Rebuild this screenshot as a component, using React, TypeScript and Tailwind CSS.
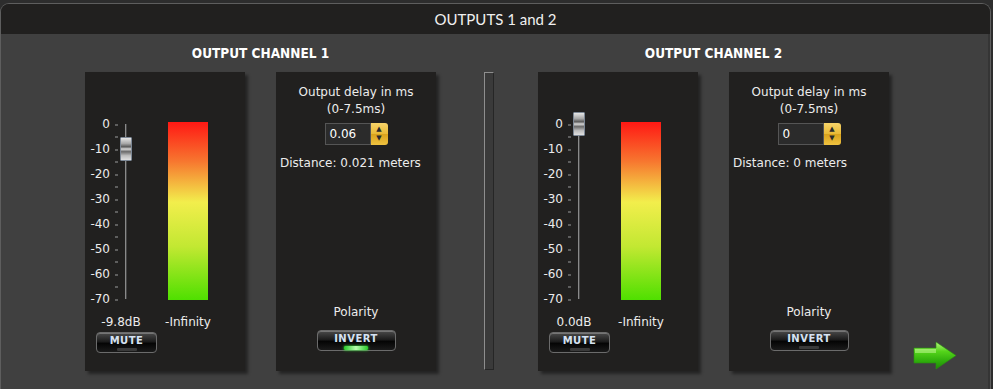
import React from "react";

const scaleMarks = [0, -10, -20, -30, -40, -50, -60, -70];

const panelFont = { fontFamily: '"DejaVu Sans", Verdana, sans-serif' };

// small glossy button used for MUTE / INVERT
const GlossButton = ({ label, width, on }: { label: string; width: string; on: boolean }) => (
  <div
    className={`relative ${width} h-[21px] rounded-[4px] border border-[#6b6b6b] bg-[linear-gradient(to_bottom,#4a4a4a_0%,#1c1c1c_45%,#050505_55%,#1a1a1a_100%)] shadow-[inset_0_1px_0_rgba(255,255,255,0.25)] flex flex-col items-center`}
  >
    <span className="mt-[2px] text-[10px] leading-[12px] font-bold tracking-[0.5px] text-[#d6e2f2]" style={panelFont}>
      {label}
    </span>
    <div
      className={
        on
          ? "mt-[1px] w-[24px] h-[4px] rounded-[1px] bg-[linear-gradient(to_right,#28c828,#b8ffb0,#28c828)] shadow-[0_0_3px_#3f3]"
          : "mt-[1px] w-[20px] h-[3px] rounded-[1px] bg-[#3a3a3a]"
      }
    />
  </div>
);

const FaderPanel = ({ value, dbLabel }: { value: number; dbLabel: string }) => {
  const knobTop = (-value / 10) * 25 - 12;
  return (
    <div className="w-[160px] h-[299px] bg-[#21201f] shadow-[3px_3px_3px_rgba(0,0,0,0.45)] flex flex-col text-[#ececec]" style={panelFont}>
      <div className="flex h-[200px] pt-[40px] box-content">
        <div className="w-[25px] flex flex-col">
          {scaleMarks.map((m) => (
            <div key={m} className="h-[25px] leading-[25px] text-[12px] text-right">
              {m}
            </div>
          ))}
        </div>
        <div className="ml-[5px] w-[3px] flex flex-col pt-[11.5px] gap-[10.5px]">
          {Array.from({ length: 15 }).map((_, i) => (
            <div key={i} className="h-[2px] w-[3px] bg-[#5e5e5e]" />
          ))}
        </div>
        <div className="ml-[7px] mt-[12px] relative w-[2px] h-[175px] bg-[#8a8a8a] border-r border-[#444]">
          <div
            className="absolute left-[-5px] w-[12px] h-[24px] rounded-[1px] border border-[#7d8896] bg-[linear-gradient(to_bottom,#e6e6e6_0%,#a8a8a8_25%,#5a5a5a_40%,#d8d8d8_50%,#6a6a6a_62%,#bdbdbd_80%,#e0e0e0_100%)]"
            style={{ top: knobTop }}
          />
        </div>
        <div className="ml-[41px] mt-[10px] w-[40px] h-[178px] bg-[linear-gradient(to_bottom,#ff1814_0%,#f7762f_22%,#f2ee4c_45%,#c2e832_70%,#4fe000_100%)]" />
      </div>
      <div className="flex mt-[3px] h-[14px] text-[12px] leading-[14px]">
        <div className="ml-[10px] w-[52px] text-center">{dbLabel}</div>
        <div className="ml-[11px] w-[60px] text-center">-Infinity</div>
      </div>
      <div className="mt-[3px] ml-[11px]">
        <GlossButton label="MUTE" width="w-[61px]" on={false} />
      </div>
    </div>
  );
};

const DelayPanel = ({ delay, distance, inverted }: { delay: string; distance: string; inverted: boolean }) => (
  <div className="w-[160px] h-[299px] bg-[#21201f] shadow-[3px_3px_3px_rgba(0,0,0,0.45)] flex flex-col items-center pt-[12px] pb-[20px] text-[#ececec] text-[12px]" style={panelFont}>
    <div className="leading-[17px] text-center">
      Output delay in ms
      <br />
      (0-7.5ms)
    </div>
    <div className="mt-[5px] flex h-[22px]">
      <div className="w-[46px] h-[22px] bg-[#2b2b2b] border border-[#555] pl-[4px] leading-[20px] text-[12px] text-white">
        {delay}
      </div>
      <div className="w-[17px] h-[22px] rounded-r-[3px] bg-[linear-gradient(to_bottom,#f7d46a_0%,#e8b935_50%,#d9a21c_51%,#efc240_100%)] flex flex-col items-center justify-center text-[#2a2a2a] text-[7px] leading-[9px]">
        <span>▲</span>
        <span>▼</span>
      </div>
    </div>
    <div className="self-start pl-[4px] mt-[11px] leading-[14px]">{distance}</div>
    <div className="flex-1" />
    <div className="leading-[14px]">Polarity</div>
    <div className="mt-[11px]">
      <GlossButton label="INVERT" width="w-[79px]" on={inverted} />
    </div>
  </div>
);

const ChannelGroup = ({
  title,
  value,
  dbLabel,
  delay,
  distance,
  inverted,
}: {
  title: string;
  value: number;
  dbLabel: string;
  delay: string;
  distance: string;
  inverted: boolean;
}) => (
  <div className="flex flex-col items-center">
    <div
      className="h-[16px] leading-[16px] text-[13.5px] font-bold text-white font-stretch-condensed mt-[1px] mb-[11px]"
      style={{ fontFamily: '"DejaVu Sans Condensed", "DejaVu Sans", sans-serif' }}
    >
      {title}
    </div>
    <div className="flex gap-[31px]">
      <FaderPanel value={value} dbLabel={dbLabel} />
      <DelayPanel delay={delay} distance={distance} inverted={inverted} />
    </div>
  </div>
);

const NextArrow = () => (
  <svg width="46" height="30" viewBox="0 0 46 30">
    <defs>
      <linearGradient id="arrowFill" x1="0" y1="0" x2="0" y2="1">
        <stop offset="0%" stopColor="#b6f57c" />
        <stop offset="35%" stopColor="#54d41a" />
        <stop offset="70%" stopColor="#2fae0c" />
        <stop offset="100%" stopColor="#1f8a06" />
      </linearGradient>
    </defs>
    <path d="M2 7 L24 7 L24 1 L44 14.5 L24 28 L24 22 L2 22 Z" fill="url(#arrowFill)" stroke="#2a9010" strokeWidth="0.6" />
    <path d="M3 8 L24 8 L24 12 L3 12 Z" fill="#d8ffb0" opacity="0.45" />
  </svg>
);

export default function App() {
  return (
    <div className="w-[993px] h-[389px] bg-[#2d2d2d] pt-[3px] overflow-hidden">
      <div className="w-[991px] h-[386px] rounded-t-[9px] border border-b-0 border-[#5e5e5e] overflow-hidden flex flex-col">
        <div
          className="h-[30px] bg-[#21201f] flex items-center justify-center text-[15px] text-[#f0f0f0]"
          style={{ fontFamily: 'Lato, "Open Sans", sans-serif' }}
        >
          OUTPUTS 1 and 2
        </div>
        <div className="flex-1 bg-[#404040] flex pl-[84px] pt-[10px] border-r-2 border-[#353535]">
          <ChannelGroup title="OUTPUT CHANNEL 1" value={-9.8} dbLabel="-9.8dB" delay="0.06" distance="Distance: 0.021 meters" inverted />
          <div className="ml-[48px] mt-[28px] w-[10px] h-[298px] bg-[#3a3a3a] border-l border-t border-[#8e8e8e] border-r border-b border-r-[#262626] border-b-[#262626]" />
          <div className="ml-[44px]">
            <ChannelGroup title="OUTPUT CHANNEL 2" value={0} dbLabel="0.0dB" delay="0" distance="Distance: 0 meters" inverted={false} />
          </div>
          <div className="ml-[23px] mt-[297px]">
            <NextArrow />
          </div>
        </div>
      </div>
    </div>
  );
}
